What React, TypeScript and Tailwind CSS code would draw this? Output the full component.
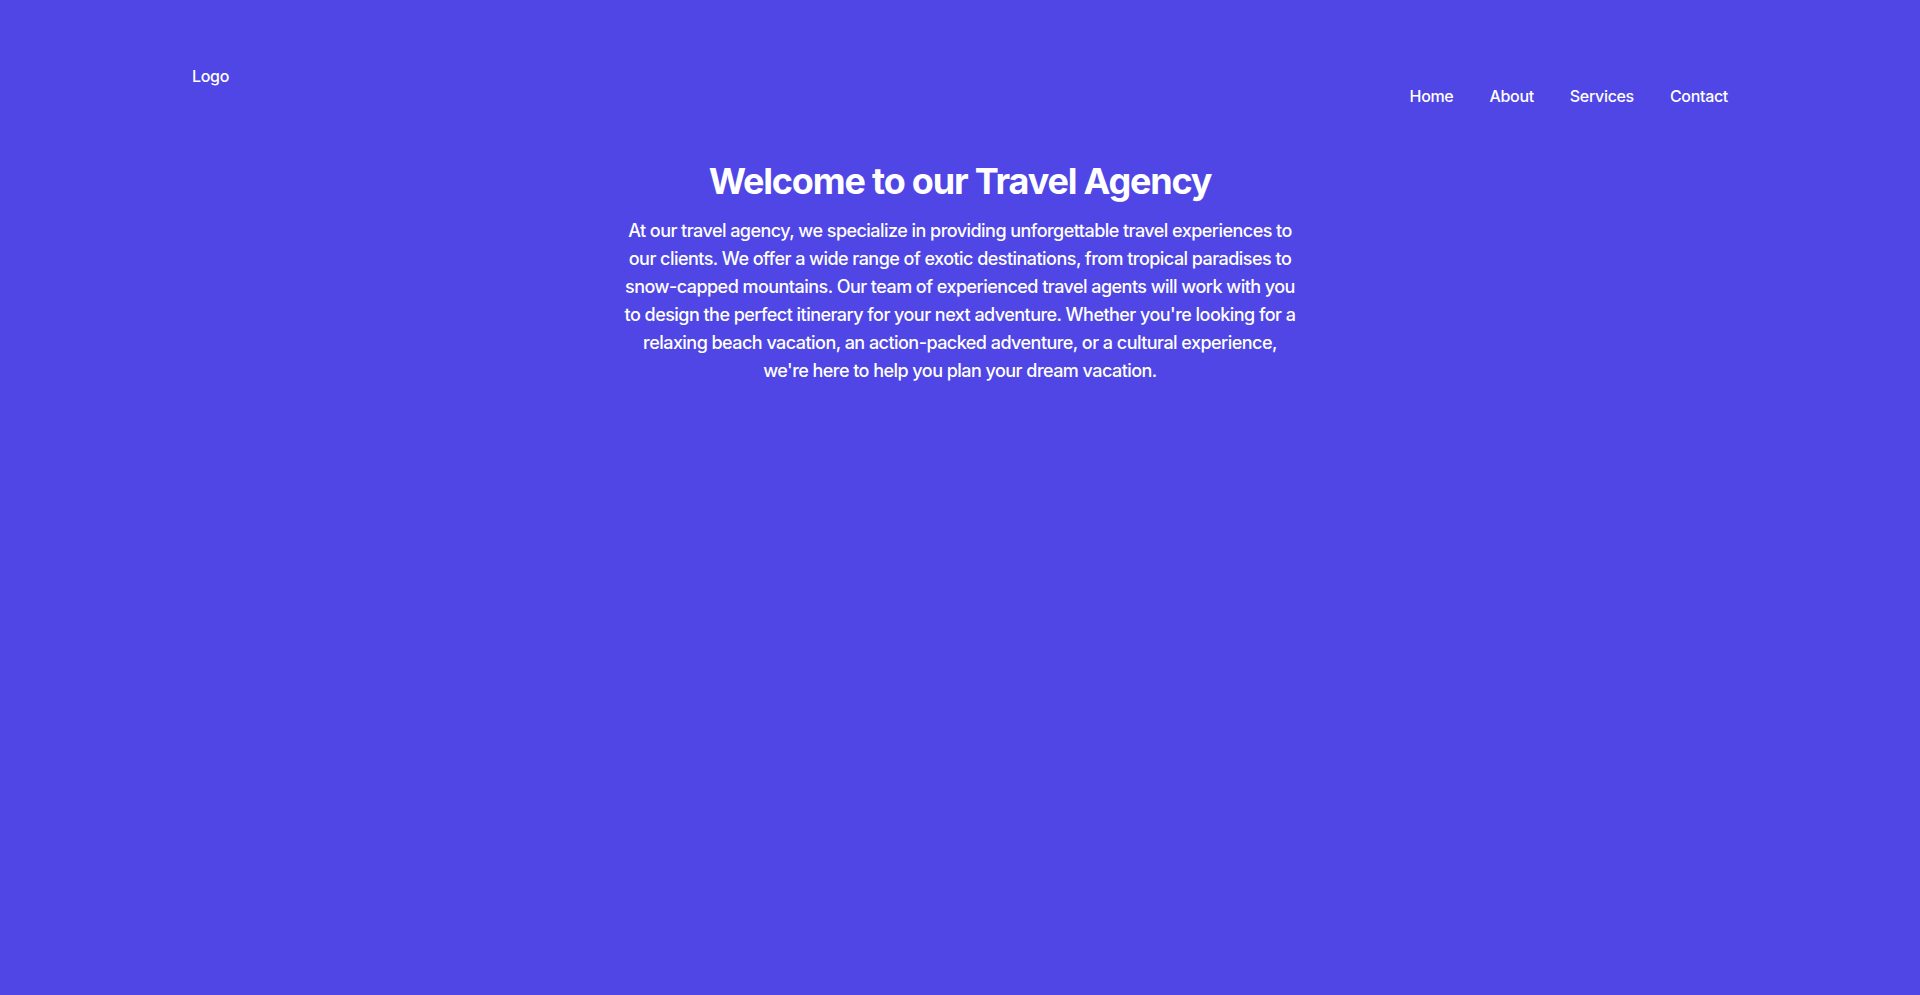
export default function App() {
  return (
    <div className="min-h-screen bg-[#4f46e5] px-48 pt-16 font-['Inter',sans-serif] text-white">
      <header className="flex items-start justify-between">
        <div className="text-base font-medium leading-6 tracking-[-0.02em]">Logo</div>
        <nav className="mt-5 flex gap-9 text-base font-medium leading-6 tracking-[-0.02em]">
          <a href="#">Home</a>
          <a href="#">About</a>
          <a href="#">Services</a>
          <a href="#">Contact</a>
        </nav>
      </header>

      <section className="mx-auto mt-[53px] max-w-[676px] text-center">
        <h1 className="mb-4 text-4xl font-bold leading-10 tracking-[-0.033em]">
          Welcome to our Travel Agency
        </h1>
        <p className="text-lg font-medium leading-7 tracking-[-0.03em]">
          At our travel agency, we specialize in providing unforgettable travel
          experiences to our clients. We offer a wide range of exotic
          destinations, from tropical paradises to snow-capped mountains. Our
          team of experienced travel agents will work with you to design the
          perfect itinerary for your next adventure. Whether you're looking for
          a relaxing beach vacation, an action-packed adventure, or a cultural
          experience, we're here to help you plan your dream vacation.
        </p>
      </section>
    </div>
  );
}
